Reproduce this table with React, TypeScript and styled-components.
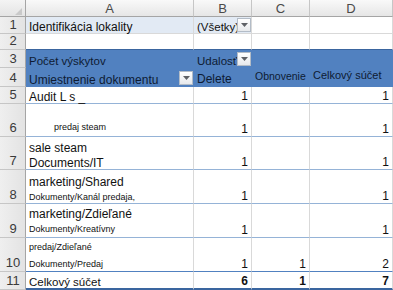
import React from "react";
import styled, { createGlobalStyle } from "styled-components";

const GlobalStyle = createGlobalStyle`
  html, body {
    margin: 0;
    padding: 0;
    background: #ffffff;
    overflow: hidden;
  }
  body {
    font-family: "Liberation Sans", Arial, sans-serif;
  }
`;

const GRID = "#d9d9d9";
const PIVOT_LINE = "#95b3d7";
const BLUE = "#5181c0";
const BLUE_DARK = "#3a659f";
const PALE = "#e2eaf4";
const HEAD_TEXT = "#0e1b33";

const ROW_HEIGHTS = [17, 17, 16, 18, 19, 17, 33, 33, 34, 34, 34, 18];

const Sheet = styled.div`
  display: grid;
  grid-template-columns: 26px 168px 58px 58px 83px;
  grid-template-rows: ${ROW_HEIGHTS.map((h) => `${h}px`).join(" ")};
  width: 393px;
  height: 290px;
  overflow: hidden;
  color: #111;
`;

const Corner = styled.div`
  box-sizing: border-box;
  background: linear-gradient(#f4f4f4, #e4e4e4);
  border-right: 1px solid #a5a5a5;
  border-bottom: 1px solid #a5a5a5;
  display: flex;
  align-items: flex-end;
  justify-content: flex-end;
  padding: 0 3px 1px 0;
`;

const ColHead = styled.div`
  box-sizing: border-box;
  background: linear-gradient(#f9f9f9, #e6e6e6);
  border-right: 1px solid #c6c6c6;
  border-bottom: 1px solid #a5a5a5;
  padding-top: 1px;
  font-size: 13px;
  line-height: 15px;
  text-align: center;
  color: #4a4a4a;
`;

const RowHead = styled.div`
  box-sizing: border-box;
  background: linear-gradient(90deg, #efefef, #e3e3e3);
  border-right: 1px solid #a5a5a5;
  border-bottom: 1px solid #c6c6c6;
  display: flex;
  align-items: flex-end;
  justify-content: center;
  padding: 0 0 1px 1px;
  font-size: 13px;
  line-height: 14px;
  color: #3a3a3a;
`;

const Cell = styled.div<{
  $bg?: string;
  $line?: string;
  $lineWidth?: number;
  $vline?: string;
  $right?: boolean;
  $color?: string;
}>`
  position: relative;
  box-sizing: border-box;
  min-width: 0;
  background: ${(p) => p.$bg ?? "#ffffff"};
  color: ${(p) => p.$color ?? "#111111"};
  border-right: 1px solid ${(p) => p.$vline ?? GRID};
  border-bottom: ${(p) => p.$lineWidth ?? 1}px solid ${(p) => p.$line ?? GRID};
  display: flex;
  flex-direction: column;
  justify-content: flex-end;
  align-items: ${(p) => (p.$right ? "flex-end" : "flex-start")};
  padding: 0 3px 0 3px;
  white-space: nowrap;
`;

const Txt = styled.span<{ $size?: number; $lh?: number; $indent?: number; $bold?: boolean }>`
  display: block;
  font-size: ${(p) => p.$size ?? 12}px;
  line-height: ${(p) => p.$lh ?? 14}px;
  padding-left: ${(p) => p.$indent ?? 0}px;
  font-weight: ${(p) => (p.$bold ? 700 : 400)};
`;

const Filter = styled.span<{ $top: number }>`
  position: absolute;
  right: 0;
  top: ${(p) => p.$top}px;
  width: 14px;
  height: 14px;
  box-sizing: border-box;
  border: 1px solid #b3bcc7;
  background: linear-gradient(#ffffff, #e7e9ec);
  display: flex;
  align-items: center;
  justify-content: center;
`;

const FilterButton = ({ top }: { top: number }) => (
  <Filter $top={top}>
    <svg width="7" height="4" viewBox="0 0 7 4">
      <polygon points="0,0 7,0 3.5,4" fill="#5e6166" />
    </svg>
  </Filter>
);

type Line = { text: string; size?: number; lh?: number; indent?: number };
type Row = { n: number; lines: Line[]; b?: string; c?: string; d?: string };

const DATA: Row[] = [
  { n: 5, lines: [{ text: "Audit L s _", lh: 12 }], b: "1", d: "1" },
  { n: 6, lines: [{ text: "predaj steam", size: 9, lh: 18, indent: 25 }], b: "1", d: "1" },
  {
    n: 7,
    lines: [
      { text: "sale steam", lh: 18 },
      { text: "Documents/IT", lh: 12 },
    ],
    b: "1",
    d: "1",
  },
  {
    n: 8,
    lines: [
      { text: "marketing/Shared", lh: 18 },
      { text: "Dokumenty/Kanál predaja,", size: 9, lh: 12 },
    ],
    b: "1",
    d: "1",
  },
  {
    n: 9,
    lines: [
      { text: "marketing/Zdieľané", lh: 13 },
      { text: "Dokumenty/Kreatívny", size: 9, lh: 16 },
    ],
    b: "1",
    d: "1",
  },
  {
    n: 10,
    lines: [
      { text: "predaj/Zdieľané", size: 9, lh: 20 },
      { text: "Dokumenty/Predaj", size: 9, lh: 14 },
    ],
    b: "1",
    c: "1",
    d: "2",
  },
];

const App: React.FC = () => {
  return (
    <>
      <GlobalStyle />
      <Sheet>
        <Corner>
          <svg width="7" height="7" viewBox="0 0 7 7">
            <polygon points="7,0 7,7 0,7" fill="#c9c9c9" />
          </svg>
        </Corner>
        {["A", "B", "C", "D"].map((l) => (
          <ColHead key={l}>{l}</ColHead>
        ))}

        <RowHead>1</RowHead>
        <Cell $bg={PALE}>
          <Txt $lh={12}>Identifikácia lokality</Txt>
        </Cell>
        <Cell $bg={PALE}>
          <Txt $size={11.5} $lh={12}>(Všetky)</Txt>
          <FilterButton top={1} />
        </Cell>
        <Cell />
        <Cell />

        <RowHead>2</RowHead>
        <Cell $line={BLUE_DARK} />
        <Cell $line={BLUE_DARK} />
        <Cell $line={BLUE_DARK} />
        <Cell $line={BLUE_DARK} />

        <RowHead>3</RowHead>
        <Cell $bg={BLUE} $vline={BLUE} $line={BLUE} $color={HEAD_TEXT}>
          <Txt $size={11.5} $lh={12}>Počet výskytov</Txt>
        </Cell>
        <Cell $bg={BLUE} $vline={BLUE} $line={BLUE} $color={HEAD_TEXT}>
          <Txt $size={11.5} $lh={12}>Udalosť</Txt>
          <FilterButton top={2} />
        </Cell>
        <Cell $bg={BLUE} $vline={BLUE} $line={BLUE} />
        <Cell $bg={BLUE} $vline={BLUE} $line={BLUE} />

        <RowHead>4</RowHead>
        <Cell $bg={BLUE} $vline={BLUE} $line={BLUE} $color={HEAD_TEXT}>
          <Txt $lh={12}>Umiestnenie dokumentu</Txt>
          <FilterButton top={3} />
        </Cell>
        <Cell $bg={BLUE} $vline={BLUE} $line={BLUE} $color={HEAD_TEXT}>
          <Txt $lh={14}>Delete</Txt>
        </Cell>
        <Cell $bg={BLUE} $vline={BLUE} $line={BLUE} $color={HEAD_TEXT}>
          <Txt $size={10.5} $lh={19}>Obnovenie</Txt>
        </Cell>
        <Cell $bg={BLUE} $vline={BLUE} $line={BLUE} $color={HEAD_TEXT}>
          <Txt $size={11} $lh={22}>Celkový súčet</Txt>
        </Cell>

        {DATA.map((row, i) => {
          const line = i === DATA.length - 1 ? BLUE : PIVOT_LINE;
          return (
            <React.Fragment key={row.n}>
              <RowHead>{row.n}</RowHead>
              <Cell $line={line}>
                {row.lines.map((l) => (
                  <Txt key={l.text} $size={l.size} $lh={l.lh} $indent={l.indent}>
                    {l.text}
                  </Txt>
                ))}
              </Cell>
              <Cell $line={line} $right>
                <Txt>{row.b}</Txt>
              </Cell>
              <Cell $line={line} $right>
                <Txt>{row.c}</Txt>
              </Cell>
              <Cell $line={line} $right>
                <Txt>{row.d}</Txt>
              </Cell>
            </React.Fragment>
          );
        })}

        <RowHead>11</RowHead>
        <Cell $line={BLUE_DARK} $lineWidth={2}>
          <Txt $size={11.5} $lh={12}>Celkový súčet</Txt>
        </Cell>
        <Cell $line={BLUE_DARK} $lineWidth={2} $right>
          <Txt $bold>6</Txt>
        </Cell>
        <Cell $line={BLUE_DARK} $lineWidth={2} $right>
          <Txt $bold>1</Txt>
        </Cell>
        <Cell $line={BLUE_DARK} $lineWidth={2} $right>
          <Txt $bold>7</Txt>
        </Cell>
      </Sheet>
    </>
  );
};

export default App;
